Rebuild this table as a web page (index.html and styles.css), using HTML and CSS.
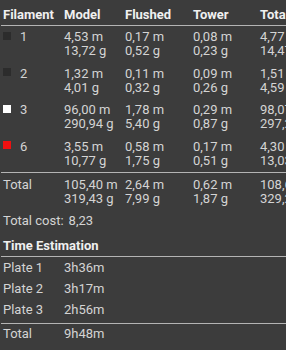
FILE: index.html
```html
<!DOCTYPE html>
<html>
<head>
<meta charset="utf-8">
<link rel="stylesheet" href="styles.css">
</head>
<body>
<div class="page">
  <div class="grid head">
    <div>Filament</div><div>Model</div><div>Flushed</div><div>Tower</div><div>Total</div>
  </div>
  <div class="rule"></div>
  <div class="rows">
    <div class="grid row">
      <div class="fil"><span class="sw sw-dark"></span>1</div>
      <div>4,53 m<br>13,72 g</div><div>0,17 m<br>0,52 g</div><div>0,08 m<br>0,23 g</div><div>4,77 m<br>14,47 g</div>
    </div>
    <div class="grid row">
      <div class="fil"><span class="sw sw-dark"></span>2</div>
      <div>1,32 m<br>4,01 g</div><div>0,11 m<br>0,32 g</div><div>0,09 m<br>0,26 g</div><div>1,51 m<br>4,59 g</div>
    </div>
    <div class="grid row">
      <div class="fil"><span class="sw sw-white"></span>3</div>
      <div>96,00 m<br>290,94 g</div><div>1,78 m<br>5,40 g</div><div>0,29 m<br>0,87 g</div><div>98,07 m<br>297,21 g</div>
    </div>
    <div class="grid row">
      <div class="fil"><span class="sw sw-red"></span>6</div>
      <div>3,55 m<br>10,77 g</div><div>0,58 m<br>1,75 g</div><div>0,17 m<br>0,51 g</div><div>4,30 m<br>13,03 g</div>
    </div>
  </div>
  <div class="rule"></div>
  <div class="grid total">
    <div>Total</div>
    <div>105,40 m<br>319,43 g</div><div>2,64 m<br>7,99 g</div><div>0,62 m<br>1,87 g</div><div>108,66 m<br>329,29 g</div>
  </div>
  <div class="cost"><span>Total cost:</span><span>8,23</span></div>
  <div class="section">Time Estimation</div>
  <div class="rule"></div>
  <div class="plates">
    <div class="prow"><span>Plate 1</span><span>3h36m</span></div>
    <div class="prow"><span>Plate 2</span><span>3h17m</span></div>
    <div class="prow"><span>Plate 3</span><span>2h56m</span></div>
  </div>
  <div class="rule"></div>
  <div class="prow ptotal"><span>Total</span><span>9h48m</span></div>
</div>
</body>
</html>
```
FILE: styles.css
```css
html, body {
  margin: 0;
  padding: 0;
  background: #3c3c3c;
  overflow: hidden;
}
.page {
  width: 286px;
  height: 350px;
  font-family: Roboto, "Noto Sans", sans-serif;
  font-size: 13px;
  line-height: 14px;
  color: #d4d4d4;
  overflow: hidden;
  white-space: nowrap;
}
.grid {
  display: grid;
  grid-template-columns: 61px 61px 68px 67px 60px;
  padding-left: 3px;
}
.head {
  font-weight: bold;
  color: #f0f0f0;
  padding-top: 8px;
  padding-bottom: 3px;
}
.rule {
  height: 1px;
  background: #b4b4b4;
  margin-left: 1px;
}
.rows {
  padding-top: 4px;
  display: flex;
  flex-direction: column;
  gap: 8.5px;
  padding-bottom: 4px;
}
.fil {
  display: flex;
  align-items: flex-start;
}
.sw {
  width: 8px;
  height: 8px;
  margin-top: 1.5px;
  margin-right: 9px;
}
.sw-dark { background: #2c2c2c; }
.sw-white { background: #ffffff; }
.sw-red { background: #f01010; }
.total {
  padding-top: 5px;
}
.cost {
  display: flex;
  gap: 5px;
  padding-left: 3px;
  padding-top: 8.5px;
}
.section {
  font-weight: bold;
  color: #f0f0f0;
  padding-left: 3px;
  padding-top: 11px;
  padding-bottom: 2.5px;
}
.plates {
  padding-top: 4px;
  padding-bottom: 6px;
  display: flex;
  flex-direction: column;
  gap: 7.3px;
}
.prow {
  display: grid;
  grid-template-columns: 61px auto;
  padding-left: 3px;
}
.ptotal {
  padding-top: 2.5px;
}
```
